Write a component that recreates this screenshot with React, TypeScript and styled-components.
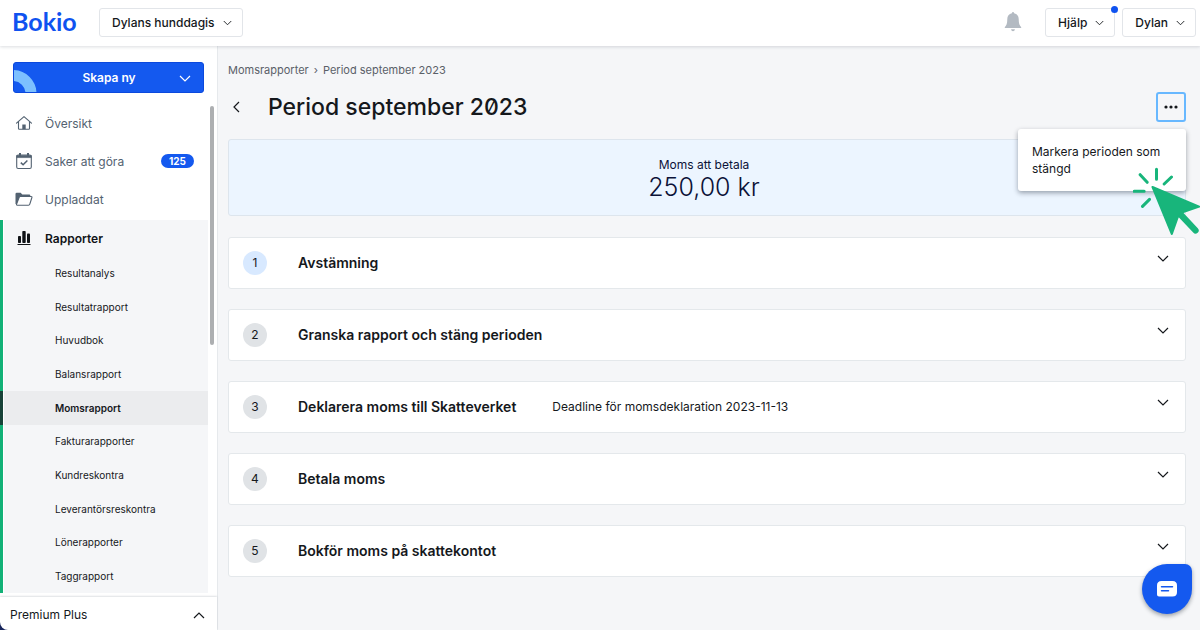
import React from "react";
import styled, { createGlobalStyle } from "styled-components";

const GlobalStyle = createGlobalStyle`
  *, *::before, *::after { box-sizing: border-box; }
  html, body, #root { height: 100%; }
  body {
    margin: 0;
    background: #f5f6f8;
    color: #15181c;
    font-family: Inter, "Liberation Sans", sans-serif;
    font-size: 12px;
  }
  button { font: inherit; color: inherit; cursor: pointer; }
  a { color: inherit; text-decoration: none; }
  ul, ol { list-style: none; margin: 0; padding: 0; }
  h1, h2, p { margin: 0; }
  svg { display: block; flex: none; }
`;

const Page = styled.div`
  display: flex;
  flex-direction: column;
  min-height: 100%;
`;

const Header = styled.header`
  display: flex;
  align-items: center;
  height: 46px;
  padding: 0 4px 2px 12px;
  background: #fff;
  box-shadow: 0 1px 3px rgba(30, 45, 65, 0.16);
  position: relative;
  z-index: 2;
`;

const Logo = styled.a`
  width: 87px;
  padding-bottom: 2px;
  color: #0f52f0;
  font-family: Lato, sans-serif;
  font-size: 25px;
  font-weight: 700;
  line-height: 30px;
`;

const HeaderButton = styled.button`
  position: relative;
  display: flex;
  align-items: center;
  gap: 8px;
  height: 29px;
  padding: 0 10px 0 12px;
  border: 1px solid #e2e5e9;
  border-radius: 3px;
  background: #fff;
  font-size: 12px;
  font-weight: 500;
`;

const HeaderActions = styled.div`
  display: flex;
  align-items: center;
  gap: 7px;
  margin-left: auto;
`;

const BellButton = styled.button`
  padding: 0;
  margin-right: 16px;
  border: 0;
  background: none;
  color: #b3bac2;
`;

const NoticeDot = styled.span`
  position: absolute;
  top: -3px;
  right: -4px;
  width: 7px;
  height: 7px;
  border-radius: 50%;
  background: #0f52f0;
`;

const Body = styled.div`
  display: flex;
  flex: 1;
`;

const Sidebar = styled.aside`
  position: relative;
  display: flex;
  flex-direction: column;
  flex: none;
  width: 218px;
  border-right: 1px solid #e6e9ec;
  background: #fff;
`;

const CreateButton = styled.button`
  position: relative;
  display: flex;
  align-items: center;
  height: 31px;
  margin: 16px 13px 11px;
  padding: 0 12px 0 0;
  overflow: hidden;
  border: 1px solid #0b49dd;
  border-radius: 3px;
  background: #1459ef;
  color: #fff;
  font-size: 12px;
  font-weight: 600;
`;

const CreateLabel = styled.span`
  flex: 1;
  padding-left: 25px;
`;

const CreateArc = styled.svg`
  position: absolute;
  left: -1px;
  bottom: -1px;
`;

const Nav = styled.nav`
  display: flex;
  flex: 1;
  flex-direction: column;
  padding-right: 9px;
`;

const NavList = styled.ul`
  display: grid;
`;

const NavLink = styled.a<{ $current?: boolean }>`
  display: flex;
  align-items: center;
  gap: 12px;
  height: ${(p) => (p.$current ? "36px" : "38px")};
  padding: 0 14px 0 ${(p) => (p.$current ? "12px" : "15px")};
  color: ${(p) => (p.$current ? "#101317" : "#536271")};
  font-weight: ${(p) => (p.$current ? 600 : 400)};
`;

const Badge = styled.span`
  margin-left: auto;
  padding: 0 8px;
  border-radius: 7px;
  background: #1459ef;
  color: #fff;
  font-size: 10px;
  font-weight: 700;
  line-height: 14px;
`;

const NavGroup = styled.div`
  display: flex;
  flex: 1;
  flex-direction: column;
  margin: 2px 0 4px;
  border-left: 3px solid #12b177;
  background: #f5f6f8;
  box-shadow: inset 1px 0 #fff;
`;

const SubList = styled.ul`
  display: flex;
  flex: 1;
  flex-direction: column;
`;

const SubItem = styled.li<{ $active: boolean }>`
  display: flex;
  flex: 1 0 auto;
  margin-left: -3px;
  border-left: 3px solid ${(p) => (p.$active ? "#184238" : "transparent")};
  background: ${(p) => (p.$active ? "#ebecee" : "transparent")};
  background-clip: padding-box;
  box-shadow: inset 1px 0 #fff;
  font-size: 10px;
  font-weight: ${(p) => (p.$active ? 600 : 400)};
`;

const SubLink = styled.a`
  display: flex;
  flex: 1;
  align-items: center;
  padding: 10px 0 10px 52px;
`;

const ScrollThumb = styled.span`
  position: absolute;
  top: 60px;
  right: 3px;
  width: 4px;
  height: 239px;
  border-radius: 2px;
  background: #adafb1;
`;

const PlanCorner = styled.div`
  background: #18255c;
`;

const PlanButton = styled.button`
  display: flex;
  align-items: center;
  justify-content: space-between;
  width: 100%;
  height: 33px;
  padding: 2px 12px 0 10px;
  border: 0;
  border-bottom-left-radius: 8px;
  background: #fff;
  box-shadow: 0 -1px 2px rgba(30, 45, 65, 0.14);
`;

const Main = styled.main`
  flex: 1;
  min-width: 0;
  padding: 16px 14px 16px 10px;
`;

const Breadcrumb = styled.nav`
  display: flex;
  gap: 5px;
  color: #5a6068;
  font-size: 11px;
  line-height: 16px;
`;

const TitleRow = styled.div`
  display: flex;
  align-items: center;
  height: 30px;
  margin: 14px 0 17px;
`;

const BackButton = styled.button`
  width: 40px;
  height: 30px;
  padding: 0 0 0 3px;
  border: 0;
  background: none;
`;

const Title = styled.h1`
  font-size: 23px;
  font-weight: 500;
  line-height: 30px;
  font-feature-settings: "zero";
`;

const MenuAnchor = styled.div`
  position: relative;
  margin-left: auto;
`;

const MoreButton = styled.button`
  display: grid;
  place-items: center;
  width: 30px;
  height: 30px;
  padding: 0;
  border: 2px solid #68b8ff;
  border-radius: 3px;
  background: #f5f6f8;
`;

const Menu = styled.div`
  position: absolute;
  top: 37px;
  right: 0;
  z-index: 3;
  width: 168px;
  border-radius: 3px;
  background: #fff;
  box-shadow: 0 2px 5px rgba(20, 30, 45, 0.4);
`;

const MenuItem = styled.button`
  width: 100%;
  padding: 14px 12px 14px 14px;
  border: 0;
  background: none;
  font-size: 12px;
  line-height: 17px;
  text-align: left;
`;

const Pointer = styled.svg`
  position: absolute;
  top: 38px;
  left: 115px;
`;

const Summary = styled.section`
  display: flex;
  flex-direction: column;
  align-items: center;
  height: 77px;
  padding: 16px 6px 0 0;
  border: 1px solid #dde5ed;
  border-radius: 3px;
  background: #ecf5ff;
  color: #0b1238;
`;

const SummaryLabel = styled.p`
  line-height: 17px;
`;

const SummaryAmount = styled.p`
  font-size: 25px;
  font-weight: 300;
  line-height: 28px;
`;

const Steps = styled.ol`
  display: grid;
  gap: 20px;
  margin-top: 21px;
`;

const StepButton = styled.button`
  display: flex;
  align-items: center;
  width: 100%;
  height: 52px;
  padding: 0 16px 1px 14px;
  border: 1px solid #e4e8eb;
  border-radius: 3px;
  background: #fff;
  text-align: left;
`;

const StepNumber = styled.span<{ $active: boolean }>`
  width: 24px;
  margin-right: 31px;
  border-radius: 50%;
  background: ${(p) => (p.$active ? "#d8e9ff" : "#e0e3e6")};
  line-height: 24px;
  text-align: center;
`;

const StepTitle = styled.span`
  font-size: 14px;
  font-weight: 600;
  line-height: 16px;
`;

const StepNote = styled.span`
  margin-left: 36px;
`;

const StepToggle = styled.span`
  margin-left: auto;
  padding-bottom: 10px;
`;

const ChatButton = styled.button`
  position: fixed;
  right: 8px;
  bottom: 16px;
  z-index: 4;
  display: grid;
  place-items: center;
  width: 50px;
  height: 50px;
  padding: 0;
  border: 0;
  border-radius: 25px 7px 25px 25px;
  background: #1459ef;
  box-shadow: 0 2px 4px rgba(20, 30, 45, 0.4);
`;

type Direction = "down" | "up" | "left";

const chevrons: Record<Direction, string> = {
  down: "M1 4 L6 9 L11 4",
  up: "M1 9 L6 4 L11 9",
  left: "M8 1 L3 6 L8 11",
};

function Chevron({ direction = "down", size = 12 }: { direction?: Direction; size?: number }) {
  return (
    <svg width={size} height={size} viewBox="0 0 12 12" fill="none" stroke="currentColor" strokeWidth="1.2" aria-hidden="true">
      <path d={chevrons[direction]} />
    </svg>
  );
}

const HomeIcon = () => (
  <svg width="18" height="16" viewBox="0 0 18 16" fill="none" stroke="currentColor" strokeWidth="1.1" aria-hidden="true">
    <path d="M1.5 8.2 9 1.6l7.500 6.600M3.500 6.800v6.700q0 .8.8.8h9.400q.8 0 .8-.8V6.800" strokeLinecap="round" strokeLinejoin="round" />
    <path d="M7.300 14.200V9.500h3.400v4.700z" fill="currentColor" stroke="none" />
  </svg>
);

const TaskIcon = () => (
  <svg width="18" height="18" viewBox="0 0 18 18" fill="none" stroke="currentColor" aria-hidden="true">
    <rect x="1.700" y="3" width="14.600" height="13.500" rx="1.500" strokeWidth="1.100" />
    <path d="M1.700 3.500h14.600V5.600H1.700z" fill="currentColor" strokeWidth=".6" />
    <path d="M5 1v3M13 1v3" strokeWidth="2" />
    <path d="m5.800 10.600 2.300 2.200 4.300-4.300" strokeWidth="1.500" />
  </svg>
);

const FolderIcon = () => (
  <svg width="18" height="14" viewBox="0 0 18 14" fill="none" stroke="currentColor" aria-hidden="true">
    <path d="M.5 12V2Q.5.800 1.700.800h4L7.300 2.500h7q1 0 1 1v1.200H5L2.500 12z" fill="currentColor" stroke="none" />
    <path d="M1.500 12.300 4.200 5.200q.3-.7 1-.7h11q1 0 .7 1l-2.100 6.700q-.3 1-1.300 1H2.300q-1 0-.8-.9z" fill="#fff" strokeWidth="1.100" />
  </svg>
);

const ReportIcon = () => (
  <svg width="18" height="16" viewBox="0 0 18 16" fill="currentColor" aria-hidden="true">
    <rect x="3" y="6" width="3" height="7" rx=".8" />
    <rect x="7.300" y="1" width="3.400" height="12" rx=".8" />
    <rect x="12" y="3.500" width="3" height="9.500" rx=".8" />
    <path d="M2.500 14h13v1h-13z" />
  </svg>
);

const BellIcon = () => (
  <svg width="18" height="20" viewBox="0 0 18 20" fill="currentColor" aria-hidden="true">
    <path d="M9 0q1 0 1.100 1.300c3 .6 4.600 2.800 4.600 5.700 0 4.500.9 6.500 2.500 8.200V16H.8v-.8C2.400 13.500 3.300 11.500 3.300 7c0-2.900 1.600-5.100 4.600-5.700Q8 0 9 0zM7 17.200h4Q10.600 19.200 9 19.200T7 17.200z" />
  </svg>
);

const ChatIcon = () => (
  <svg width="20" height="16" viewBox="0 0 20 16" aria-hidden="true">
    <path d="M4.500 0h11Q20 0 20 4.500v6.500Q20 15.500 15.500 15.500H2Q0 15.500 0 13.500v-9Q0 0 4.500 0z" fill="#fff" />
    <path d="M4.500 5.700h11M4.500 9.700h7" stroke="#1459ef" strokeWidth="1.500" strokeLinecap="round" />
  </svg>
);

const reports = [
  "Resultanalys",
  "Resultatrapport",
  "Huvudbok",
  "Balansrapport",
  "Momsrapport",
  "Fakturarapporter",
  "Kundreskontra",
  "Leverantörsreskontra",
  "Lönerapporter",
  "Taggrapport",
];

const steps: { title: string; note?: string }[] = [
  { title: "Avstämning" },
  { title: "Granska rapport och stäng perioden" },
  { title: "Deklarera moms till Skatteverket", note: "Deadline för momsdeklaration 2023-11-13" },
  { title: "Betala moms" },
  { title: "Bokför moms på skattekontot" },
];

export default function App() {
  return (
    <Page>
      <GlobalStyle />
      <Header>
        <Logo href="#">Bokio</Logo>
        <HeaderButton>
          Dylans hunddagis
          <Chevron size={9} />
        </HeaderButton>
        <HeaderActions>
          <BellButton aria-label="Notiser">
            <BellIcon />
          </BellButton>
          <HeaderButton>
            Hjälp
            <Chevron size={9} />
            <NoticeDot />
          </HeaderButton>
          <HeaderButton>
            Dylan
            <Chevron size={9} />
          </HeaderButton>
        </HeaderActions>
      </Header>
      <Body>
        <Sidebar>
          <CreateButton>
            <CreateArc width="24" height="23" viewBox="0 0 24 23" fill="none" aria-hidden="true">
              <path d="M0 5.500A18 18 0 0 1 18 23.500" stroke="#7cc0ff" strokeWidth="11" />
            </CreateArc>
            <CreateLabel>Skapa ny</CreateLabel>
            <Chevron />
          </CreateButton>
          <Nav aria-label="Huvudmeny">
            <NavList>
              <li>
                <NavLink href="#"><HomeIcon />Översikt</NavLink>
              </li>
              <li>
                <NavLink href="#"><TaskIcon />Saker att göra<Badge>125</Badge></NavLink>
              </li>
              <li>
                <NavLink href="#"><FolderIcon />Uppladdat</NavLink>
              </li>
            </NavList>
            <NavGroup>
              <NavLink href="#" $current><ReportIcon />Rapporter</NavLink>
              <SubList>
                {reports.map((name) => (
                  <SubItem key={name} $active={name === "Momsrapport"}>
                    <SubLink href="#">{name}</SubLink>
                  </SubItem>
                ))}
              </SubList>
            </NavGroup>
          </Nav>
          <ScrollThumb />
          <PlanCorner>
            <PlanButton>
              Premium Plus
              <Chevron direction="up" />
            </PlanButton>
          </PlanCorner>
        </Sidebar>
        <Main>
          <Breadcrumb aria-label="Sökväg">
            <a href="#">Momsrapporter</a>
            <span>›</span>
            <span>Period september 2023</span>
          </Breadcrumb>
          <TitleRow>
            <BackButton aria-label="Tillbaka">
              <Chevron direction="left" />
            </BackButton>
            <Title>Period september 2023</Title>
            <MenuAnchor>
              <MoreButton aria-label="Fler val">
                <svg width="14" height="4" viewBox="0 0 14 4" fill="currentColor" aria-hidden="true">
                  <circle cx="2" cy="2" r="1.600" />
                  <circle cx="7" cy="2" r="1.600" />
                  <circle cx="12" cy="2" r="1.600" />
                </svg>
              </MoreButton>
              <Menu>
                <MenuItem>Markera perioden som stängd</MenuItem>
                <Pointer width="67" height="70" viewBox="400 140 200 210" aria-hidden="true">
                  <g stroke="#18b57b" strokeLinecap="round" fill="none">
                    <path d="M470 147V177M515 170L493 191M421 163L442 186M403 213H433M428 258L449 237" strokeWidth="9" />
                    <path d="M535 275L587 330" strokeWidth="19" />
                  </g>
                  <path d="M458 200L598 259L546 277L534 290L516 341Z" fill="#18b57b" stroke="#18b57b" strokeWidth="6" strokeLinejoin="round" />
                </Pointer>
              </Menu>
            </MenuAnchor>
          </TitleRow>
          <Summary>
            <SummaryLabel>Moms att betala</SummaryLabel>
            <SummaryAmount>250,00 kr</SummaryAmount>
          </Summary>
          <Steps>
            {steps.map((step, index) => (
              <li key={step.title}>
                <StepButton>
                  <StepNumber $active={index === 0}>{index + 1}</StepNumber>
                  <StepTitle>{step.title}</StepTitle>
                  {step.note && <StepNote>{step.note}</StepNote>}
                  <StepToggle>
                    <Chevron />
                  </StepToggle>
                </StepButton>
              </li>
            ))}
          </Steps>
        </Main>
      </Body>
      <ChatButton aria-label="Öppna chatt">
        <ChatIcon />
      </ChatButton>
    </Page>
  );
}
